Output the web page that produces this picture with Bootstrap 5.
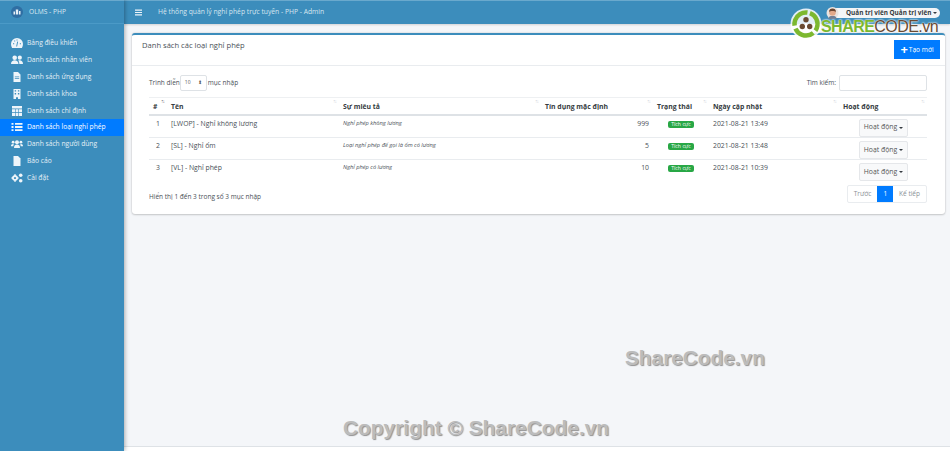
<!DOCTYPE html>
<html lang="vi">
<head>
<meta charset="UTF-8">
<title>OLMS - PHP</title>
<link rel="stylesheet" href="https://cdn.jsdelivr.net/npm/bootstrap@5.3.3/dist/css/bootstrap.min.css">
<style>
html, body { height: 100%; }
body { font-family: "Open Sans", "Liberation Sans", sans-serif; font-size: 6.5px; color: #212529; background: #f4f6f9; overflow: hidden; }
.app-wrap { position: relative; width: 950px; height: 451px; overflow: hidden; }
.side-bar { width: 124px; background: #3c8dbc; color: #e9f2f8; box-shadow: 1px 0 4px rgba(0,0,0,.3); z-index: 2; }
.brand-row { height: 24px; padding: 0 11px; border-bottom: 1px solid #4b9ac7; border-top: 1px solid #6aa9cd; gap: 6px; font-size: 6.7px; color: #dbe9f2; }
.brand-logo { width: 12px; height: 12px; flex: none; }
.menu-list { margin-top: 11px; }
.menu-row { height: 16.8px; padding-left: 11px; gap: 4px; color: #e4eff6; font-size: 6.7px; white-space: nowrap; }
.menu-row svg { width: 12px; height: 10px; fill: #eef5fa; flex: none; }
.menu-row.active-row { background: #007bff; color: #fff; }
.top-bar { height: 24px; background: #3c8dbc; border-top: 1px solid #6aa9cd; padding-left: 11px; color: #d6e6f0; font-size: 6.75px; box-shadow: 0 1px 2px rgba(0,0,0,.15); }
.top-bar svg { width: 7px; height: 7px; fill: #eef5fa; margin-right: 16px; }
.user-pill { position: absolute; right: 10px; top: 8px; height: 10px; width: 112px; background: #f3f5f7; border-radius: 6px; font-size: 6.4px; font-weight: 700; color: #343a40; padding-left: 18px; white-space: nowrap; }
.user-face { position: absolute; left: 826px; top: 7px; width: 13px; height: 12px; z-index: 1; }
.caret-mini { display: inline-block; border-top: 2.5px solid #343a40; border-left: 2px solid transparent; border-right: 2px solid transparent; margin-left: 2px; vertical-align: 1px; }
.content-area { padding: 9px 5px 0 8px; }
.list-card { background: #fff; border-top: 2px solid #3c8dbc; border-radius: 3px; box-shadow: 0 0 2px rgba(0,0,0,.18), 0 1px 2px rgba(0,0,0,.15); height: 181px; }
.card-head { height: 31px; padding: 5px 5px 0 10px; border-bottom: 1px solid #e9ecef; font-size: 7.6px; color: #495057; line-height: 10px; }
.new-btn { width: 46px; height: 19px; background: #007bff; color: #fff; font-size: 6.6px; gap: 1px; }
.new-btn b { font-size: 13px; line-height: 1; font-weight: 700; }
.card-inner { padding: 9px 18px 0 17px; color: #495057; }
.len-box { width: 27px; height: 16px; border: 1px solid #dee2e6; border-radius: 2px; font-size: 5px; margin: 0 1px 0 0; padding: 0 4px; color: #555; }
.search-box { width: 88px; height: 16px; border: 1px solid #dee2e6; border-radius: 2px; margin-left: 3px; }
.tools-row { height: 16px; margin-bottom: 6px; }
.leave-table { table-layout: fixed; width: 778px; border-collapse: collapse; font-size: 6.85px; color: #495057; }
.leave-table th { position: relative; height: 17px; font-weight: 700; color: #343a40; padding: 2px 4px 0; border-top: 1px solid #eef0f2; border-bottom: 2px solid #dee2e6; font-size: 6.85px; white-space: nowrap; }
.leave-table th::after { content: "↑↓"; position: absolute; right: 3px; top: 0; font-size: 5px; font-weight: 400; color: #ccd1d6; letter-spacing: -1px; }
.leave-table th.sort-on::after { color: #555; }
.leave-table td { height: 22px; padding: 3px 4px 0; vertical-align: top; border-bottom: 1px solid #e9ecef; white-space: nowrap; }
.leave-table tbody tr:first-child td { height: 23px; }
.leave-table tr:last-child td { border-bottom: 0; }
.desc-cell { font-style: italic; font-size: 5.7px; }
.state-tag { display: inline-block; background: #28a745; color: #fff; font-size: 5.2px; line-height: 7px; padding: 0 3px; border-radius: 2px; margin-top: 1px; }
.act-btn { width: 49px; height: 18px; background: #f8f9fa; border: 1px solid #e5e7ea; border-radius: 2px; font-size: 6.85px; color: #555; margin: 0 0 0 16px; }
.foot-row { margin-top: 3px; height: 18px; }
.foot-note { margin-top: 6px; }
.pager-set { height: 18px; border: 1px solid #e9ecef; border-radius: 2px; font-size: 6.5px; color: #8a9096; }
.pager-set span { height: 100%; padding: 0 6px; }
.pager-set .on-page { background: #007bff; color: #fff; }
.foot-line { position: absolute; left: 124px; right: 0; bottom: 0; height: 5px; background: #fff; border-top: 1px solid #dee2e6; }
.wm-text { position: absolute; font-family: "Liberation Sans", sans-serif; font-weight: 700; color: #bcbcbc; text-shadow: 1px 1px 1px #929292; white-space: nowrap; z-index: 3; }
.wm-one { left: 625px; top: 346px; font-size: 20.8px; line-height: 24px; }
.wm-two { left: 343px; top: 416px; font-size: 20.9px; line-height: 24px; }
.share-logo { position: absolute; left: 790px; top: 8px; width: 160px; height: 32px; z-index: 4; }
.share-word { position: absolute; left: 31px; top: 11px; font-family: "Liberation Sans", sans-serif; font-size: 16px; letter-spacing: -.55px; line-height: 1; color: #6a4a32; white-space: nowrap; text-shadow: 0 0 2px #fff, 0 0 2px #fff; }
.share-word b { color: #7cb82f; }
.share-logo svg { position: absolute; left: 0; top: 0; width: 32px; height: 32px; }
</style>
</head>
<body>
<div class="app-wrap d-flex">
  <aside class="side-bar flex-shrink-0">
    <div class="brand-row d-flex align-items-center">
      <svg class="brand-logo" viewBox="0 0 12 12"><circle cx="6" cy="6" r="6" fill="#2f6ea3"/><path d="M2.500 8.500V5.500h1.500v3zM4.800 8.500V3.500h2.400v5zM8 8.500V5h1.500v3.500z" fill="#e6f0f7"/></svg>
      <span>OLMS - PHP</span>
    </div>
    <div class="menu-list d-flex flex-column">
      <div class="menu-row d-flex align-items-center"><svg viewBox="0 0 12 10"><path fill-rule="evenodd" d="M6 0a6 6 0 0 0-6 6c0 1.500.4 2.800 1.100 4h9.800c.7-1.200 1.100-2.500 1.100-4a6 6 0 0 0-6-6zM2 5.200h1.200v1H2zM8.800 5.200H10v1H8.800zM3.200 2.400h1v1h-1zM5.500 1.500h1v1h-1zM5.200 8.500l1-5 .9.200-1 4.800z"/></svg>Bảng điều khiển</div>
      <div class="menu-row d-flex align-items-center"><svg viewBox="0 0 12 10"><circle cx="3.700" cy="2.700" r="2.300"/><circle cx="8.800" cy="2.700" r="2.100"/><path d="M0 9c0-2.700 1.700-3.800 3.700-3.800S7.500 6.300 7.500 9zM8.300 9c0-1.500-.3-2.700-1.100-3.500C9.700 4.800 12 5.800 12 9z"/></svg>Danh sách nhân viên</div>
      <div class="menu-row d-flex align-items-center"><svg viewBox="0 0 12 10"><path d="M2.500 0h4.500l2.500 2.500V10h-7zm1.300 4.500v.8h4.400v-.8zm0 1.800v.8h4.400v-.8z" fill-rule="evenodd"/></svg>Danh sách ứng dụng</div>
      <div class="menu-row d-flex align-items-center"><svg viewBox="0 0 12 10"><path d="M2.500 0h7v10H7V8.300H5V10H2.500zm1.200 1.200v1.400h1.400V1.200zm3.200 0v1.400h1.400V1.200zM3.700 4v1.400h1.400V4zm3.200 0v1.400h1.400V4z" fill-rule="evenodd"/></svg>Danh sách khoa</div>
      <div class="menu-row d-flex align-items-center"><svg viewBox="0 0 12 10"><path d="M1 0h10v2.500H1zM1 3.300h3v2.900H1zM4.600 3.300h2.800v2.900H4.600zM8 3.300h3v2.900H8zM1 7h3v3H1zM4.600 7h2.800v3H4.600zM8 7h3v3H8z"/></svg>Danh sách chỉ định</div>
      <div class="menu-row active-row d-flex align-items-center"><svg viewBox="0 0 12 10"><path d="M.5 1h2v1.800h-2zM4 1h7.500v1.800H4zM.5 4.100h2v1.800h-2zM4 4.100h7.500v1.800H4zM.5 7.200h2V9h-2zM4 7.200h7.500V9H4z"/></svg>Danh sách loại nghỉ phép</div>
      <div class="menu-row d-flex align-items-center"><svg viewBox="0 0 12 10"><circle cx="6" cy="3.200" r="2"/><circle cx="2.100" cy="3.200" r="1.400"/><circle cx="9.900" cy="3.200" r="1.400"/><path d="M3 9c0-2.700 1.300-3.500 3-3.500S9 6.300 9 9zM0 7.300c0-1.800.9-2.500 2.700-2.200L2.300 7.300zM12 7.300c0-1.800-.9-2.500-2.700-2.200l.4 2.200z"/></svg>Danh sách người dùng</div>
      <div class="menu-row d-flex align-items-center"><svg viewBox="0 0 12 10"><path d="M2.500 0h4.500l2.500 2.500V10h-7z"/></svg>Báo cáo</div>
      <div class="menu-row d-flex align-items-center"><svg viewBox="0 0 12 10"><path d="M4 2a3 3 0 1 0 .01 0zm0 1.900a1.100 1.100 0 1 1-.01 0z" fill-rule="evenodd"/><path d="M3.400 1h1.200v2H3.400zM3.400 7h1.200v2H3.400zM.2 4.400h2v1.200h-2zM5.800 4.400h2v1.200h-2z"/><circle cx="9.700" cy="2.300" r="1.800"/><circle cx="9.700" cy="7.700" r="1.800"/></svg>Cài đặt</div>
    </div>
  </aside>
  <div class="flex-grow-1 d-flex flex-column">
    <nav class="top-bar d-flex align-items-center">
      <svg viewBox="0 0 7 7"><path d="M0 .5h7v1.200H0zM0 2.900h7v1.200H0zM0 5.300h7v1.200H0z"/></svg>
      <span>Hệ thống quản lý nghỉ phép trực tuyến - PHP - Admin</span>
    </nav>
    <main class="content-area">
      <section class="list-card">
        <div class="card-head d-flex justify-content-between">
          <span>Danh sách các loại nghỉ phép</span>
          <span class="new-btn d-flex align-items-center justify-content-center"><b>+</b>Tạo mới</span>
        </div>
        <div class="card-inner">
          <div class="tools-row d-flex justify-content-between align-items-center">
            <div class="d-flex align-items-center">Trình diễn<span class="len-box d-flex align-items-center justify-content-between">10<span>⬍</span></span>mục nhập</div>
            <div class="d-flex align-items-center">Tìm kiếm:<span class="search-box"></span></div>
          </div>
          <table class="leave-table">
            <colgroup><col style="width:18px"><col style="width:172px"><col style="width:202px"><col style="width:112px"><col style="width:56px"><col style="width:130px"><col style="width:88px"></colgroup>
            <thead><tr><th class="sort-on">#</th><th>Tên</th><th>Sự miêu tả</th><th>Tín dụng mặc định</th><th>Trạng thái</th><th>Ngày cập nhật</th><th>Hoạt động</th></tr></thead>
            <tbody>
              <tr><td class="text-center">1</td><td>[LWOP] - Nghỉ không lương</td><td class="desc-cell">Nghỉ phép không lương</td><td class="text-end">999</td><td class="text-center"><span class="state-tag">Tích cực</span></td><td>2021-08-21 13:49</td><td><span class="act-btn d-flex align-items-center justify-content-center">Hoạt động<span class="caret-mini"></span></span></td></tr>
              <tr><td class="text-center">2</td><td>[SL] - Nghỉ ốm</td><td class="desc-cell">Loại nghỉ phép để gọi là ốm có lương</td><td class="text-end">5</td><td class="text-center"><span class="state-tag">Tích cực</span></td><td>2021-08-21 13:48</td><td><span class="act-btn d-flex align-items-center justify-content-center">Hoạt động<span class="caret-mini"></span></span></td></tr>
              <tr><td class="text-center">3</td><td>[VL] - Nghỉ phép</td><td class="desc-cell">Nghỉ phép có lương</td><td class="text-end">10</td><td class="text-center"><span class="state-tag">Tích cực</span></td><td>2021-08-21 10:39</td><td><span class="act-btn d-flex align-items-center justify-content-center">Hoạt động<span class="caret-mini"></span></span></td></tr>
            </tbody>
          </table>
          <div class="foot-row d-flex justify-content-between align-items-center">
            <span class="foot-note">Hiển thị 1 đến 3 trong số 3 mục nhập</span>
            <div class="pager-set d-flex"><span class="d-flex align-items-center">Trước</span><span class="on-page d-flex align-items-center">1</span><span class="d-flex align-items-center">Kế tiếp</span></div>
          </div>
        </div>
      </section>
    </main>
  </div>
  <svg class="user-face" viewBox="0 0 13 12"><circle cx="6.500" cy="6" r="6" fill="#e9e4e0"/><path d="M2.500 12c0-2.500 1.500-3 4-3s4 .5 4 3z" fill="#6f7f96"/><circle cx="6.500" cy="5.500" r="3.300" fill="#e2a98a"/><path d="M3 5c0-2.500 1.500-3.500 3.500-3.500S10 2.500 10 5C8.500 3.800 4.500 3.800 3 5z" fill="#6a4632"/></svg>
  <div class="user-pill d-flex align-items-center">Quản trị viên Quản trị viên<span class="caret-mini"></span></div>
  <div class="foot-line"></div>
  <div class="share-logo">
    <svg viewBox="0 0 32 32">
      <circle cx="16" cy="16" r="15.500" fill="#fff" fill-opacity=".85"/>
      <circle cx="16" cy="16" r="11.500" fill="none" stroke="#7cb82f" stroke-width="4.500" stroke-dasharray="21 3.100" transform="rotate(-70 16 16)"/>
      <circle cx="16" cy="11.800" r="2.700" fill="#6a4a32"/><circle cx="12.300" cy="18.500" r="2.700" fill="#6a4a32"/><circle cx="19.700" cy="18.500" r="2.700" fill="#6a4a32"/><circle cx="16" cy="16" r="1.300" fill="#fff"/>
    </svg>
    <span class="share-word"><b>SHARE</b>CODE.vn</span>
  </div>
  <div class="wm-text wm-one">ShareCode.vn</div>
  <div class="wm-text wm-two">Copyright © ShareCode.vn</div>
</div>
<script src="https://cdn.jsdelivr.net/npm/bootstrap@5.3.3/dist/js/bootstrap.bundle.min.js"></script>
</body>
</html>
